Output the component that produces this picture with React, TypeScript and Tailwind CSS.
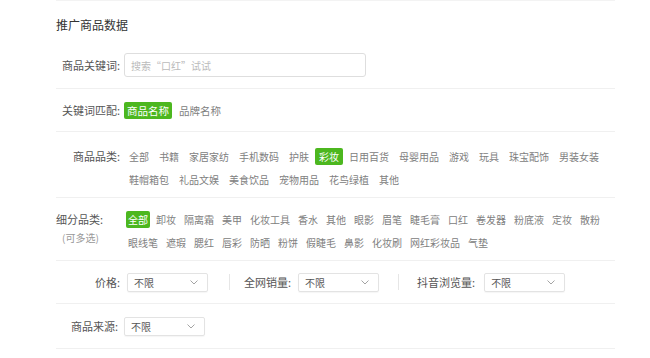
import React from 'react'

const cats1 = ['全部', '书籍', '家居家纺', '手机数码', '护肤', '彩妆', '日用百货', '母婴用品', '游戏', '玩具', '珠宝配饰', '男装女装']
const cats2 = ['鞋帽箱包', '礼品文娱', '美食饮品', '宠物用品', '花鸟绿植', '其他']
const subs1 = ['全部', '卸妆', '隔离霜', '美甲', '化妆工具', '香水', '其他', '眼影', '眉笔', '睫毛膏', '口红', '卷发器', '粉底液', '定妆', '散粉']
const subs2 = ['眼线笔', '遮瑕', '腮红', '唇彩', '防晒', '粉饼', '假睫毛', '鼻影', '化妆刷', '网红彩妆品', '气垫']

const Chevron = () => (
  <svg width="8" height="5" viewBox="0 0 8 5" className="block">
    <polyline points="0.5,0.5 4,4 7.5,0.5" fill="none" stroke="#9a9a9a" strokeWidth="0.9" />
  </svg>
)

function Select({ className = '' }: { className?: string }) {
  return (
    <div className={`flex h-[19px] w-[81px] items-center justify-between rounded-[2px] border border-[#e3e3e3] pl-[6px] pr-[9px] text-[10px] text-[#555] shadow-[0_1px_1px_rgba(0,0,0,0.04)] ${className}`}>
      <span>不限</span>
      <Chevron />
    </div>
  )
}

function Tag({ text, active, px }: { text: string; active?: boolean; px: string }) {
  return (
    <span
      className={`${px} h-[17px] leading-[17px] rounded-[2px] whitespace-nowrap ${active ? 'bg-[#4cb71f] text-white' : 'text-[#808080]'}`}
    >
      {text}
    </span>
  )
}

const Label = ({ children, w = 'w-[64px]' }: { children: React.ReactNode; w?: string }) => (
  <div className={`${w} shrink-0 text-right text-[11px] text-[#555]`}>{children}</div>
)

export default function App() {
  return (
    <div className="h-[358px] w-[650px] overflow-hidden bg-white font-['Noto_Sans_CJK_SC',sans-serif]">
      <div className="ml-[56px] w-[559px] border-t border-[#f3f3f3]">
        {/* title + keyword */}
        <div className="h-[88px] border-b border-[#f0f0f0]">
          <div className="pt-[15px] text-[12px] leading-[18px] text-[#333]">推广商品数据</div>
          <div className="mt-[19px] flex items-center">
            <Label>商品关键词:</Label>
            <div className="ml-[4px] flex h-[24px] w-[242px] items-center rounded-[3px] border border-[#dedede] px-[6px] text-[10px] text-[#bbb]">
              搜索“口红”试试
            </div>
          </div>
        </div>

        {/* keyword match */}
        <div className="flex h-[43px] items-center border-b border-[#f0f0f0]">
          <Label>关键词匹配:</Label>
          <div className="ml-[4px] flex gap-[4px] text-[10.5px]">
            <Tag text="商品名称" active px="px-[3px]" />
            <Tag text="品牌名称" px="px-[3px]" />
          </div>
        </div>

        {/* category */}
        <div className="flex h-[66px] border-b border-[#f0f0f0] pt-[16px]">
          <Label>商品品类:</Label>
          <div className="ml-[5px] flex flex-col gap-[6px] text-[10px]">
            <div className="flex gap-[2px]">
              {cats1.map((c) => (
                <Tag key={c} text={c} active={c === '彩妆'} px="px-[4px]" />
              ))}
            </div>
            <div className="flex gap-[2px]">
              {cats2.map((c) => (
                <Tag key={c} text={c} px="px-[4px]" />
              ))}
            </div>
          </div>
        </div>

        {/* sub category */}
        <div className="flex h-[63px] border-b border-[#f0f0f0] pt-[13px]">
          <div className="w-[70px] shrink-0">
            <div className="text-[11px] leading-[17px] text-[#555]">细分品类:</div>
            <div className="ml-[6px] mt-[2px] text-[10px] text-[#999]">(可多选)</div>
          </div>
          <div className="flex flex-col gap-[6px] text-[10px]">
            <div className="flex gap-[4px]">
              {subs1.map((c, i) => (
                <Tag key={c + i} text={c} active={i === 0} px="px-[2px]" />
              ))}
            </div>
            <div className="flex gap-[4px]">
              {subs2.map((c) => (
                <Tag key={c} text={c} px="px-[2px]" />
              ))}
            </div>
          </div>
        </div>

        {/* ranges */}
        <div className="flex h-[43px] items-center border-b border-[#f0f0f0]">
          <Label>价格:</Label>
          <Select className="ml-[7px]" />
          <div className="ml-[21px] h-[16px] w-px bg-[#e6e6e6]" />
          <div className="ml-[14px] text-[11px] text-[#555]">全网销量:</div>
          <Select className="ml-[7px]" />
          <div className="ml-[19px] h-[16px] w-px bg-[#e6e6e6]" />
          <div className="ml-[18px] text-[11px] text-[#555]">抖音浏览量:</div>
          <Select className="ml-[9px]" />
        </div>

        {/* source */}
        <div className="flex h-[45px] items-center border-b border-[#f0f0f0]">
          <Label w="w-[62px]">商品来源:</Label>
          <Select className="ml-[6px]" />
        </div>
      </div>
    </div>
  )
}
